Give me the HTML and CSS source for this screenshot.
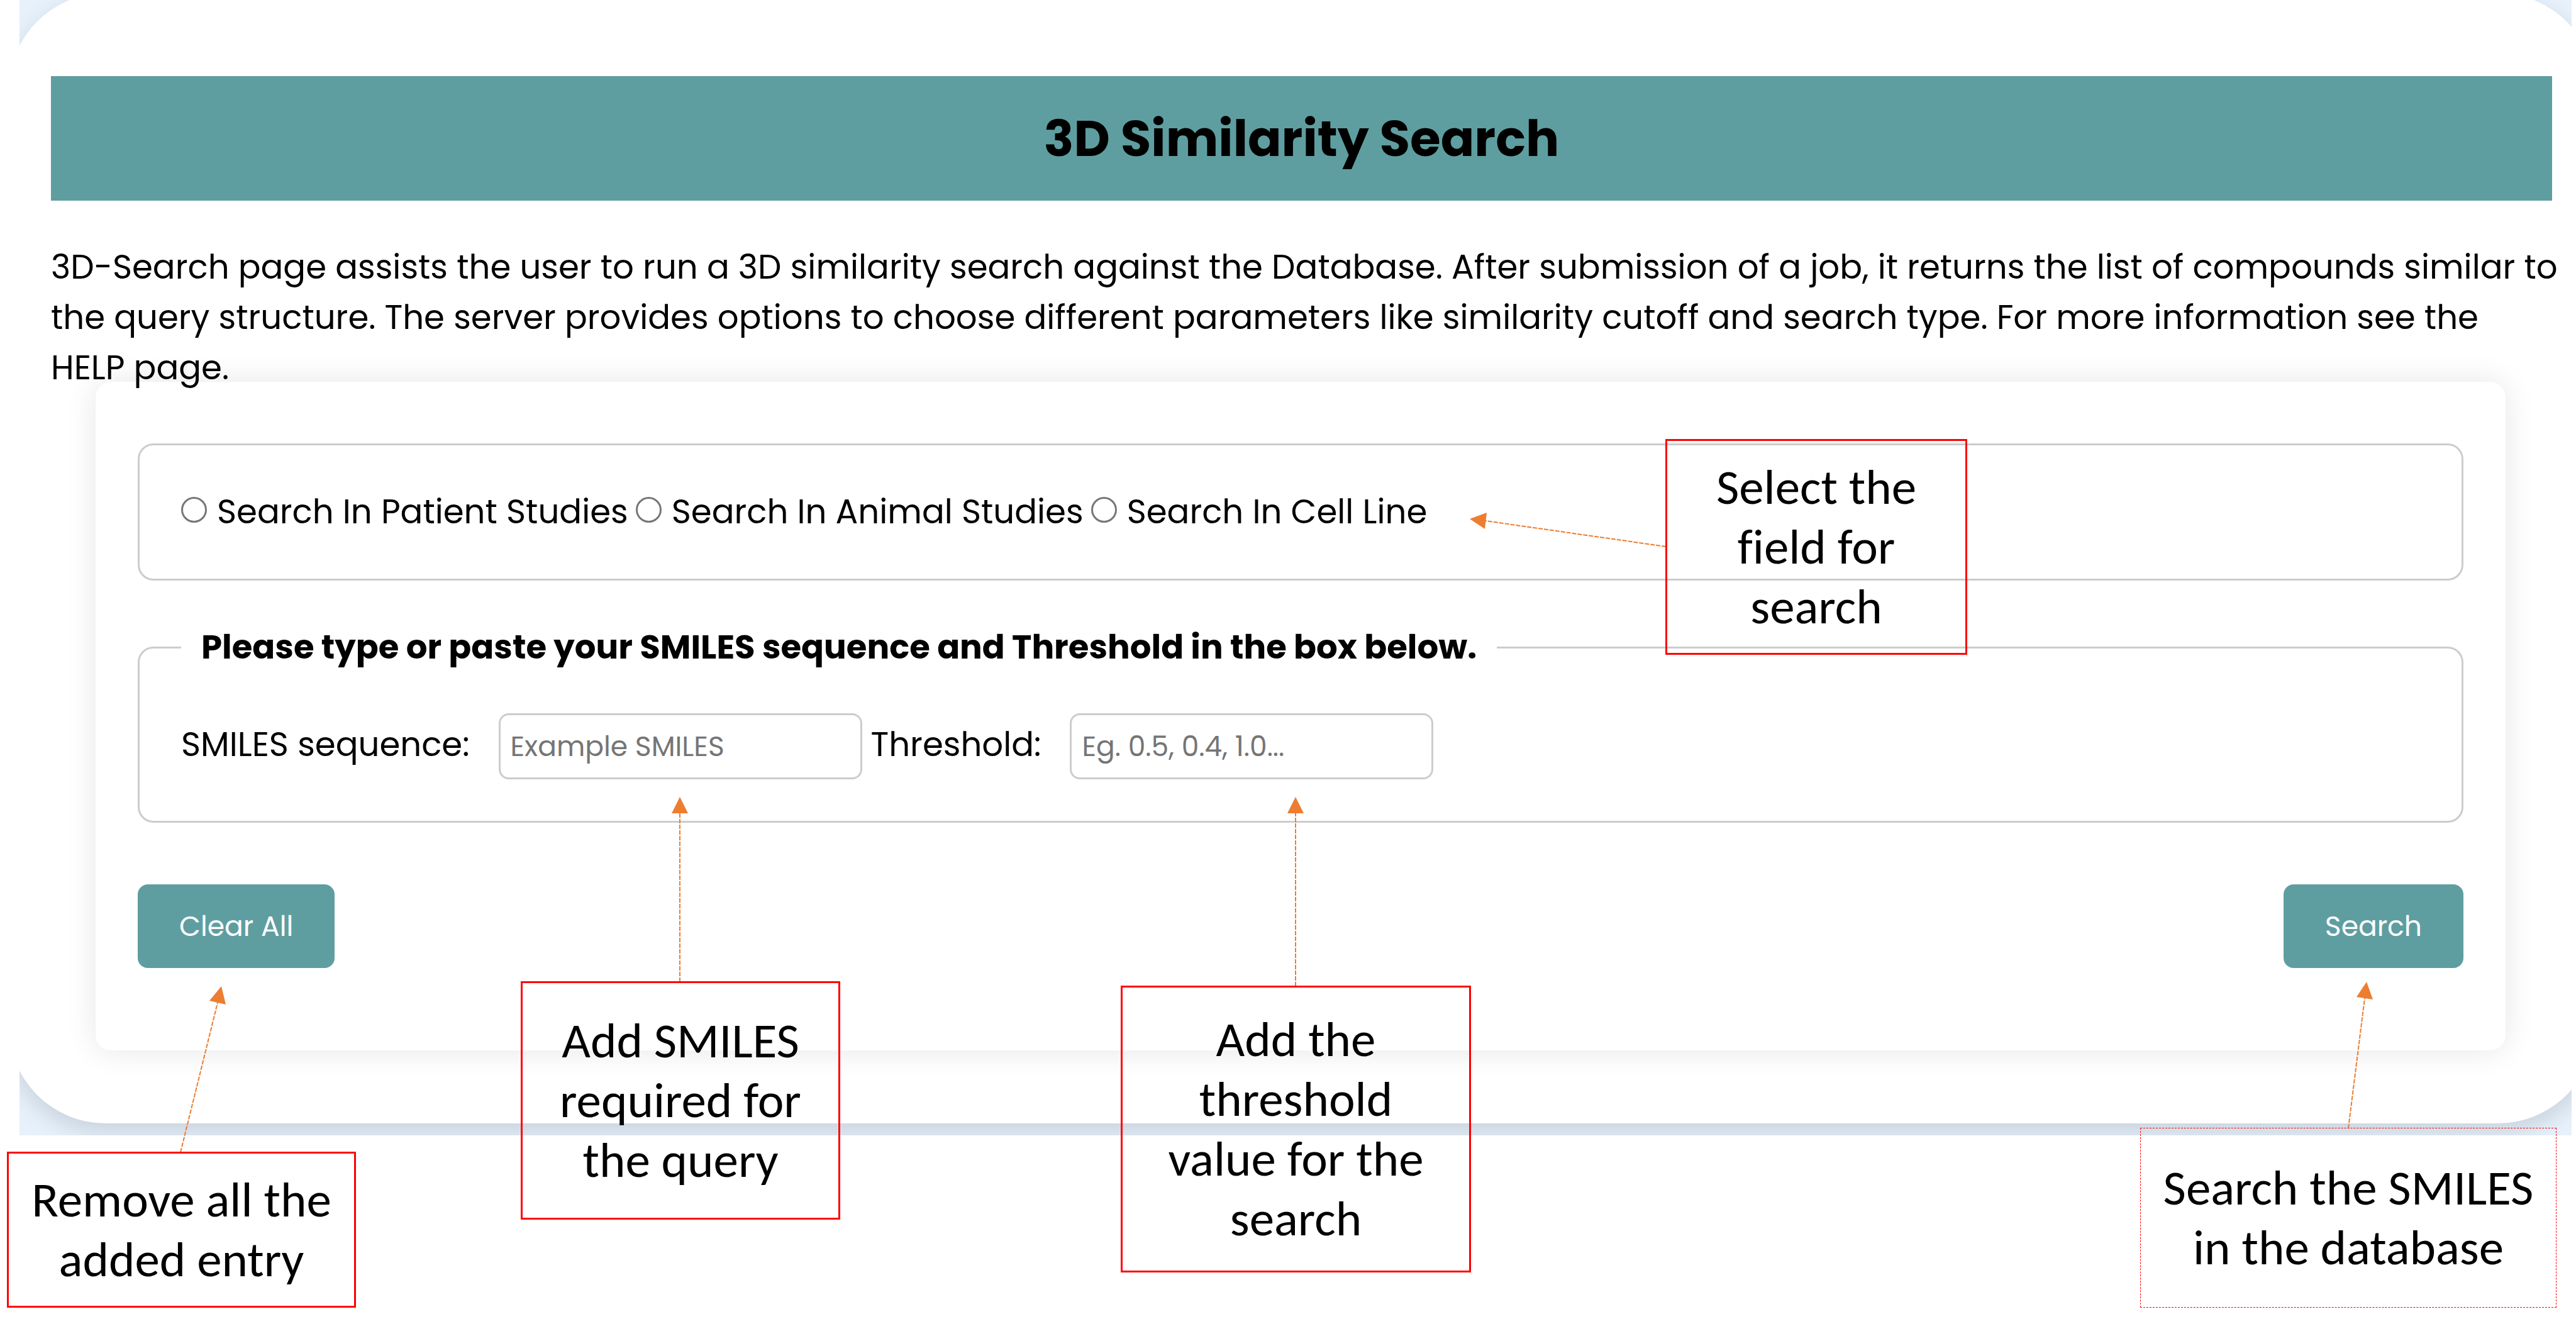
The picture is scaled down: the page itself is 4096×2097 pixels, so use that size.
FILE: index.html
```html
<!DOCTYPE html>
<html lang="en">
<head>
<meta charset="utf-8">
<title>3D Similarity Search</title>
<link rel="stylesheet" href="styles.css">
</head>
<body>
<main class="backdrop">
  <section class="panel">
    <h1 class="banner">3D Similarity Search</h1>
    <p class="intro">3D-Search page assists the user to run a 3D similarity search against the Database. After submission of a job, it returns the list of compounds similar to the query structure. The server provides options to choose different parameters like similarity cutoff and search type. For more information see the HELP&nbsp;page.</p>
    <form class="card">
      <fieldset class="group choices">
        <label class="choice"><input class="radio" type="radio" name="field">Search In Patient Studies</label>
        <label class="choice"><input class="radio" type="radio" name="field">Search In Animal Studies</label>
        <label class="choice"><input class="radio" type="radio" name="field">Search In Cell Line</label>
      </fieldset>
      <fieldset class="group query">
        <legend class="legend">Please type or paste your SMILES sequence and Threshold in the box below.</legend>
        <div class="fields">
          <label class="name" for="smiles">SMILES sequence:</label>
          <input class="box" id="smiles" type="text" placeholder="Example SMILES">
          <label class="name" for="threshold">Threshold:</label>
          <input class="box" id="threshold" type="text" placeholder="Eg. 0.5, 0.4, 1.0...">
        </div>
      </fieldset>
      <div class="actions">
        <button class="button" type="reset">Clear All</button>
        <button class="button" type="submit">Search</button>
      </div>
    </form>
  </section>
</main>

<svg class="arrows" viewBox="0 0 4096 2097" aria-hidden="true">
  <g class="shafts">
    <path d="M2649 869L2362 828"/>
    <path d="M1081 1561V1293"/>
    <path d="M2060 1568V1293"/>
    <path d="M287 1832L346 1594"/>
    <path d="M3734 1794L3760 1587"/>
  </g>
  <g class="heads">
    <path d="M2337 825L2364 815L2361 841Z"/>
    <path d="M1081 1267L1094 1293H1068Z"/>
    <path d="M2060 1267L2073 1293H2047Z"/>
    <path d="M352 1568L333 1591L359 1597Z"/>
    <path d="M3763 1561L3747 1585L3773 1589Z"/>
  </g>
</svg>
<aside class="note note-field">Select the field for search</aside>
<aside class="note note-smiles">Add SMILES required for the query</aside>
<aside class="note note-threshold">Add the threshold value for the search</aside>
<aside class="note note-clear">Remove all the added entry</aside>
<aside class="note note-search">Search the SMILES in the database</aside>
</body>
</html>
```
FILE: styles.css
```css
* { box-sizing: border-box; }

body {
  position: relative;
  min-height: 100vh;
  margin: 0;
  background: #fff;
  color: #000;
  font-family: Poppins, Inter, "Noto Sans", sans-serif;
  font-size: 53px;
  line-height: 80px;
}

.backdrop {
  margin: 0 7px 0 31px;
  padding-bottom: 19px;
  overflow: hidden;
  background: #e6f1fc;
}

.panel {
  margin: -11px -37px 0 -17px;
  padding: 132px 68px 116px 67px;
  border-radius: 154px;
  background: #fff;
  box-shadow: 0 14px 36px rgba(0, 0, 0, 0.13);
}

.banner {
  margin: 0 0 66px;
  padding: 50px 0 48px;
  background: #5f9ea0;
  font-size: 79px;
  font-weight: 700;
  line-height: 100px;
  text-align: center;
}

.intro { margin: 0 -16px 0 0; }

.card {
  margin: -18px 74px 0 71px;
  padding: 98px 67px 131px;
  border-radius: 25px;
  box-shadow: 0 0 50px rgba(0, 0, 0, 0.1);
}

.group {
  margin: 0;
  padding: 0 66px;
  border: 3px solid #ccc;
  border-radius: 25px;
}

.choices {
  display: flex;
  gap: 12px;
  padding-top: 66px;
  padding-bottom: 66px;
}

.choice {
  display: flex;
  align-items: center;
  gap: 16px;
}

.radio {
  appearance: none;
  width: 41px;
  height: 41px;
  margin: 0 0 8px;
  border: 3px solid #767676;
  border-radius: 50%;
}

.query {
  margin-top: 66px;
  padding-bottom: 66px;
}

.legend {
  padding: 0 32px;
  font-weight: 700;
}

.fields {
  display: flex;
  align-items: baseline;
  gap: 14px;
  padding-top: 65px;
}

.name { padding-right: 32px; }

.box {
  width: 578px;
  height: 105px;
  padding: 0 16px;
  border: 3px solid #ccc;
  border-radius: 16px;
  font: inherit;
  font-size: 44px;
}

.box::placeholder { color: #757575; }

.actions {
  display: flex;
  justify-content: space-between;
  margin-top: 98px;
}

.button {
  height: 133px;
  padding: 0 66px;
  border: 0;
  border-radius: 16px;
  background: #5f9ea0;
  color: #fff;
  font: inherit;
  font-size: 44px;
  font-weight: 400;
}

.arrows {
  position: absolute;
  top: 0;
  left: 0;
  width: 100%;
}

.shafts {
  fill: none;
  stroke: #ed7d31;
  stroke-width: 2;
  stroke-dasharray: 7 2;
}

.heads { fill: #ed7d31; }

.note {
  position: absolute;
  display: flex;
  align-items: center;
  justify-content: center;
  border: 3px solid #f00;
  font-family: Calibri, Carlito, Lato, sans-serif;
  font-size: 79px;
  font-variant-ligatures: none;
  line-height: 95px;
  text-align: center;
}

.note-field {
  top: 698px;
  left: 2648px;
  width: 480px;
  height: 343px;
  padding: 0 60px;
}

.note-smiles {
  top: 1560px;
  left: 828px;
  width: 508px;
  height: 379px;
  padding: 0 40px;
}

.note-threshold {
  top: 1567px;
  left: 1782px;
  width: 557px;
  height: 456px;
  padding: 0 60px;
}

.note-clear {
  top: 1831px;
  left: 11px;
  width: 555px;
  height: 248px;
}

.note-search {
  top: 1793px;
  left: 3403px;
  width: 662px;
  height: 286px;
  padding: 0 24px;
  border: 1px dashed #f00;
}
```
